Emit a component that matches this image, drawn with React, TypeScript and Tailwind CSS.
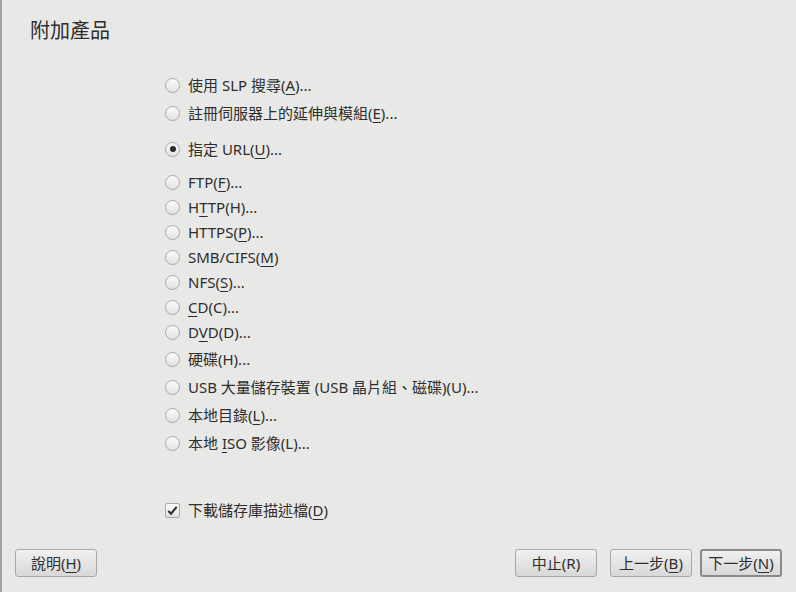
import React from 'react';

type Opt = { pre: string; key?: string; post: string; checked?: boolean; h: string; mt?: string };

const options: Opt[] = [
  { pre: '使用 SLP 搜尋(', key: 'A', post: ')...', h: 'h-[28px]' },
  { pre: '註冊伺服器上的延伸與模組(', key: 'E', post: ')...', h: 'h-[28px]' },
  { pre: '指定 URL(', key: 'U', post: ')...', checked: true, h: 'h-[28px]', mt: 'mt-[8px]' },
  { pre: 'FTP(', key: 'F', post: ')...', h: 'h-[25px]', mt: 'mt-[7px]' },
  { pre: 'H', key: 'T', post: 'TP(H)...', h: 'h-[25px]' },
  { pre: 'HTTPS(', key: 'P', post: ')...', h: 'h-[25px]' },
  { pre: 'SMB/CIFS(', key: 'M', post: ')', h: 'h-[25px]' },
  { pre: 'NFS(', key: 'S', post: ')...', h: 'h-[25px]' },
  { pre: '', key: 'C', post: 'D(C)...', h: 'h-[25px]' },
  { pre: 'D', key: 'V', post: 'D(D)...', h: 'h-[25px]' },
  { pre: '硬碟(H)...', post: '', h: 'h-[28px]' },
  { pre: 'USB 大量儲存裝置 (USB 晶片組、磁碟)(U)...', post: '', h: 'h-[28px]' },
  { pre: '本地目錄(', key: 'L', post: ')...', h: 'h-[28px]' },
  { pre: '本地 ', key: 'I', post: 'SO 影像(L)...', h: 'h-[28px]' },
];

const Label = ({ pre, k, post }: { pre: string; k?: string; post: string }) => (
  <span className="whitespace-pre">
    {pre}
    {k && <span className="underline underline-offset-[3px] decoration-1">{k}</span>}
    {post}
  </span>
);

const Radio = ({ checked }: { checked?: boolean }) => (
  <span className="w-[15px] h-[15px] rounded-full border border-[#a9a9a9] bg-gradient-to-b from-[#fbfbfb] to-[#e2e2e2] flex items-center justify-center shrink-0">
    {checked && <span className="w-[6px] h-[6px] rounded-full bg-[#2c2c2c]" />}
  </span>
);

const Button = ({ pre, k, post, def }: { pre: string; k?: string; post: string; def?: boolean }) => (
  <button
    className={`w-[82px] h-[28px] rounded-[3px] bg-gradient-to-b from-[#f0f0f0] to-[#d8d8d8] text-[15px] text-[#2e2e2e] flex items-center justify-center ${
      def ? 'border-2 border-[#8a8a8a]' : 'border border-[#a8a8a8]'
    }`}
  >
    <Label pre={pre} k={k} post={post} />
  </button>
);

export default function App() {
  return (
    <div
      className="w-[796px] h-[592px] bg-[#e8e8e7] border-l-2 border-[#a3a3a3] flex flex-col text-[#2e2e2e] text-[15px] overflow-hidden"
      style={{ fontFamily: '"Noto Sans", "Noto Sans CJK TC", sans-serif' }}
    >
      <div className="h-[71px] pt-[17px] pl-[28px]">
        <h1 className="text-[20px] leading-[28px] font-normal">附加產品</h1>
      </div>

      <div className="flex flex-col pl-[163px]">
        {options.map((o, i) => (
          <div key={i} className={`${o.h} ${o.mt ?? ''} flex items-center gap-[8px]`}>
            <Radio checked={o.checked} />
            <Label pre={o.pre} k={o.key} post={o.post} />
          </div>
        ))}
        <div className="h-[28px] mt-[39px] flex items-center gap-[8px]">
          <span className="w-[15px] h-[15px] rounded-[2px] border border-[#a9a9a9] bg-gradient-to-b from-[#fbfbfb] to-[#e2e2e2] flex items-center justify-center shrink-0">
            <svg viewBox="0 0 14 14" className="w-[13px] h-[13px]">
              <path d="M2.5 7.5 L5.5 10.5 L11.5 3" fill="none" stroke="#2c2c2c" strokeWidth="2.2" />
            </svg>
          </span>
          <Label pre="下載儲存庫描述檔(" k="D" post=")" />
        </div>
      </div>

      <div className="mt-auto flex items-center pl-[13px] pr-[14px] pb-[15px]">
        <Button pre="說明(" k="H" post=")" />
        <div className="ml-auto flex gap-[13px]">
          <Button pre="中止(R)" post="" />
          <div className="flex gap-[8px]">
            <Button pre="上一步(" k="B" post=")" />
            <Button pre="下一步(" k="N" post=")" def />
          </div>
        </div>
      </div>
    </div>
  );
}
